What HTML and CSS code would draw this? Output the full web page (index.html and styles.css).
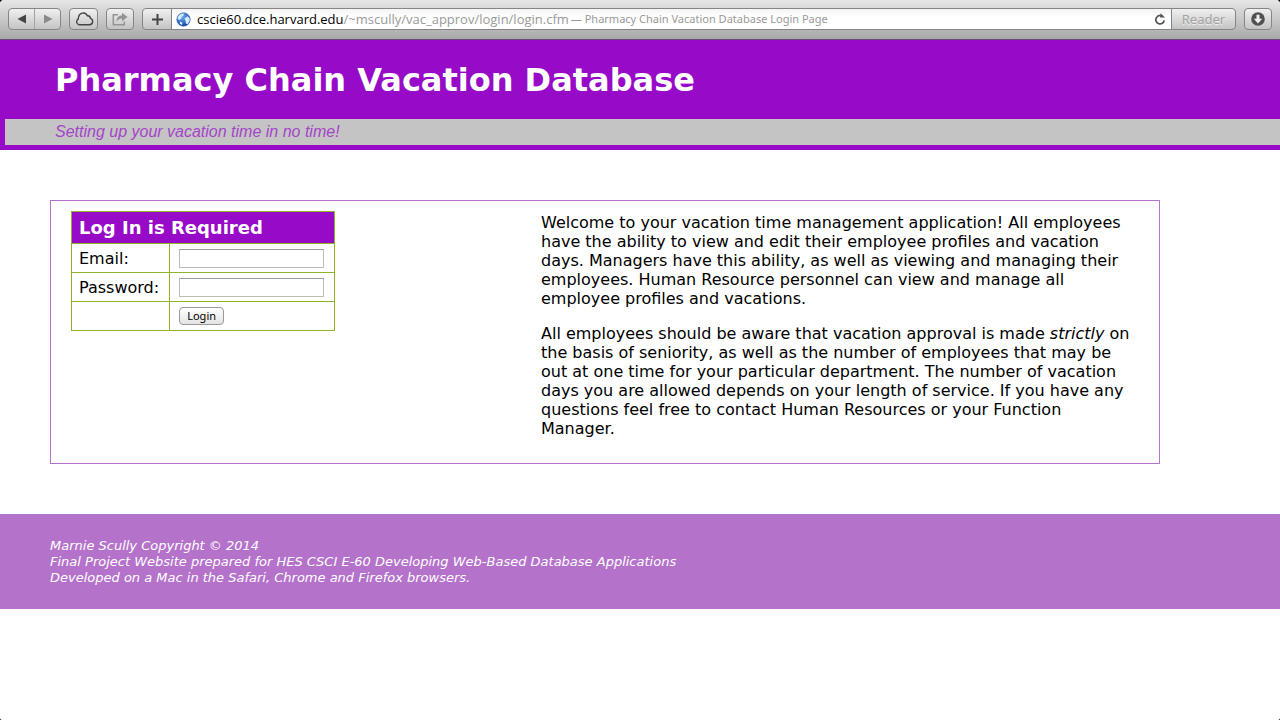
FILE: index.html
```html
<!DOCTYPE html>
<html lang="en">
<head>
<meta charset="utf-8">
<title>Pharmacy Chain Vacation Database Login Page</title>
<link rel="stylesheet" href="styles.css">
</head>
<body>
<div class="toolbar">
  <div class="nav-group">
    <button class="nav-button" type="button" aria-label="Back"><svg width="10" height="10" viewBox="0 0 10 10"><path d="M9 .5v9L.5 5z" fill="#444"/></svg></button>
    <button class="nav-button" type="button" aria-label="Forward"><svg width="10" height="10" viewBox="0 0 10 10"><path d="M1 .5v9L9.5 5z" fill="#8a8a8a"/></svg></button>
  </div>
  <button class="tool cloud" type="button" aria-label="iCloud tabs"><svg width="20" height="14" viewBox="0 0 20 14"><path d="M5 12.8h10.6a3.3 3.3 0 0 0 .9-6.4 3 3 0 0 0-3.2-2.7A4.6 4.6 0 0 0 4.6 5a3 3 0 0 0-.3 2.2A3 3 0 0 0 5 12.8z" fill="none" stroke="#444" stroke-width="1.4"/></svg></button>
  <button class="tool share" type="button" aria-label="Share"><svg width="18" height="14" viewBox="0 0 18 14"><path d="M7 2.8H2.3v9.900h11V9.5" fill="none" stroke="#939393" stroke-width="1.5"/><path d="M5.500 9.800C5.500 5.500 8 3.600 11 3.600V.8l5.500 4.300L11 9.300V6.500c-2.300 0-4 .8-5.500 3.300z" fill="#939393"/></svg></button>
  <div class="location">
    <button class="add" type="button" aria-label="Add bookmark"><svg width="11" height="11" viewBox="0 0 11 11"><path d="M5.500 0v11M0 5.500h11" stroke="#444" stroke-width="2"/></svg></button>
    <div class="address">
      <svg class="globe" width="15" height="15" viewBox="0 0 15 15"><defs><radialGradient id="sea" cx=".4" cy=".3" r=".7"><stop offset="0" stop-color="#6fb0f0"/><stop offset="1" stop-color="#13459e"/></radialGradient></defs><circle cx="7.500" cy="7.500" r="6.700" fill="url(#sea)" stroke="#2b62b4" stroke-width=".6"/><path d="M2 4.500 5 1.800l3.200-.3-.7 2-1.700 1L5 6.800 3.300 8 1.500 7zM8.500 6.500l3-2.300 2 1.800.3 2.800-2.300 3.500-1.600-.8-.3-2.300zM3.800 9.500l2.700 1.200-.6 2.300-2-1.300z" fill="#d3ecff"/></svg>
      <span class="host">cscie60.dce.harvard.edu</span><span class="path">/~mscully/vac_approv/login/login.cfm</span><span class="page-title">— Pharmacy Chain Vacation Database Login Page</span>
      <button class="reload" type="button" aria-label="Reload"><svg width="12" height="13" viewBox="0 0 12 13"><path d="M8.500 3.300A4.200 4.200 0 1 0 10.200 7.300" fill="none" stroke="#555" stroke-width="1.700"/><path d="M6.500.3 11 4.500H6z" fill="#555"/></svg></button>
    </div>
    <button class="reader" type="button" disabled>Reader</button>
  </div>
  <button class="tool downloads" type="button" aria-label="Downloads"><svg width="14" height="14" viewBox="0 0 14 14"><circle cx="7" cy="7" r="6.800" fill="#505050"/><path d="M5.500 2.800h3v4h2.700L7 11.400 2.800 6.800h2.700z" fill="#f0f0f0"/></svg></button>
</div>

<header class="banner">
  <h1>Pharmacy Chain Vacation Database</h1>
  <p class="tagline">Setting up your vacation time in no time!</p>
</header>

<main class="content">
  <form class="login">
    <table class="login-table">
      <tr><th colspan="2">Log In is Required</th></tr>
      <tr><td><label for="email">Email:</label></td><td><input class="field" id="email" type="text"></td></tr>
      <tr><td><label for="password">Password:</label></td><td><input class="field" id="password" type="password"></td></tr>
      <tr><td></td><td><button class="submit" type="submit">Login</button></td></tr>
    </table>
  </form>
  <section class="welcome">
    <p>Welcome to your vacation time management application! All employees have the ability to view and edit their employee profiles and vacation days. Managers have this ability, as well as viewing and managing their employees. Human Resource personnel can view and manage all employee profiles and vacations.</p>
    <p>All employees should be aware that vacation approval is made <em>strictly</em> on the basis of seniority, as well as the number of employees that may be out at one time for your particular department. The number of vacation days you are allowed depends on your length of service. If you have any questions feel free to contact Human Resources or your Function Manager.</p>
  </section>
</main>

<footer class="footer">
  Marnie Scully Copyright © 2014<br>
  Final Project Website prepared for HES CSCI E-60 Developing Web-Based Database Applications<br>
  Developed on a Mac in the Safari, Chrome and Firefox browsers.
</footer>
</body>
</html>
```
FILE: styles.css
```css
* { box-sizing: border-box; }

html { background: #000; }

body {
  min-height: 100vh;
  margin: 0;
  border-radius: 4px 4px 2px 2px;
  background: #fff;
  color: #000;
  font: 16px/19px Verdana, "DejaVu Sans", sans-serif;
}

button { padding: 0; font: inherit; }

.toolbar {
  display: flex;
  gap: 8px;
  height: 40px;
  padding: 8px 8px 0;
  border-bottom: 1px solid #6b4a7c;
  border-radius: 4px 4px 0 0;
  background: linear-gradient(#e6e6e6, #c8c8c8 50%, #a8a8a8);
}

.nav-group,
.tool,
.location {
  height: 22px;
  border: 1px solid #858585;
  border-radius: 4px;
  background: linear-gradient(#f0f0f0, #c4c4c4);
}

.nav-group { display: flex; width: 53px; }

.nav-button,
.tool,
.add,
.reload,
.reader {
  display: flex;
  align-items: center;
  justify-content: center;
}

.nav-button {
  flex: 1;
  border: 0;
  background: none;
}

.nav-button + .nav-button { border-left: 1px solid #a2a2a2; }

.tool { width: 28px; }
.cloud { width: 29px; }

.location {
  display: flex;
  flex: 1;
  min-width: 0;
  overflow: hidden;
}

.add {
  width: 29px;
  border: 0;
  border-right: 1px solid #858585;
  background: none;
}

.address {
  display: flex;
  flex: 1;
  align-items: center;
  min-width: 0;
  padding: 0 5px 0 4px;
  background: linear-gradient(#f4f4f4, #fff 40%);
  font: 13px/16px "Open Sans", sans-serif;
  white-space: nowrap;
}

.globe { margin-right: 6px; }
.path { color: #999; }

.page-title {
  margin-left: 2px;
  color: #999;
  font: 11px/14px "Noto Sans", sans-serif;
}

.reload {
  margin-left: auto;
  border: 0;
  background: none;
}

.reader {
  width: 64px;
  border: 0;
  border-left: 1px solid #858585;
  background: none;
  color: #a2a2a2;
  font: 13px/16px "Noto Sans", sans-serif;
  text-shadow: 0 1px #eee;
}

.banner {
  padding: 0 0 5px 5px;
  background: #960ac8;
}

.banner h1 {
  margin: 0;
  padding: 20px 50px 19px;
  color: #fff;
  font-size: 32px;
  line-height: 40px;
}

.tagline {
  margin: 0;
  padding: 3px 50px 4px;
  background: #c4c4c4;
  color: #a445c8;
  font: italic 16px/19px "Liberation Sans", sans-serif;
}

.content {
  display: grid;
  grid-template-columns: 470px 1fr;
  margin: 50px 120px 50px 50px;
  padding: 10px 20px 9px;
  border: 1px solid #b472ca;
}

.login-table {
  border-collapse: collapse;
}

.login-table th,
.login-table td {
  height: 29px;
  padding: 0 10px 0 7px;
  border: 1px solid #8fb424;
  text-align: left;
}

.login-table th {
  height: 32px;
  background: #960ac8;
  color: #fff;
  font-size: 18px;
}

.login-table td + td { padding: 0 10px 0 9px; }

.field,
.submit { display: block; }

.field {
  width: 145px;
  height: 19px;
  padding: 0 2px;
  border: 1px solid #bbb;
  border-top-color: #999;
  background: #fff;
  font-size: 11px;
}

.submit {
  width: 45px;
  height: 18px;
  border: 1px solid #999;
  border-radius: 4px;
  background: linear-gradient(#fff, #e4e4e4);
  color: #000;
  font: 11px/14px "Noto Sans", sans-serif;
}

.welcome p { margin: 2px 0 16px; }

.footer {
  padding: 24px 50px 23px;
  background: #b472ca;
  color: #fff;
  font-size: 13px;
  font-style: italic;
  line-height: 16px;
}
```
